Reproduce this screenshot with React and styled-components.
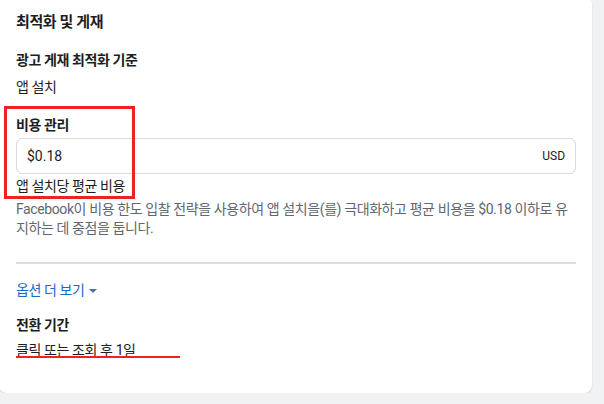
import React from "react";
import styled, { createGlobalStyle } from "styled-components";

const Global = createGlobalStyle`
  html, body { margin: 0; padding: 0; background: #f1f2f3; }
  body { font-family: Roboto, "Noto Sans CJK KR", sans-serif; color: #1c1e21; }
  * { box-sizing: border-box; }
`;

const Card = styled.div`
  width: 593px;
  margin: -4px 0 0 -1px;
  background: #fff;
  border-radius: 8px;
  box-shadow: 0 1px 2px rgba(0,0,0,0.12);
  padding: 16px 16px 33px 17px;
  display: flex;
  flex-direction: column;
  font-size: 14px;
  letter-spacing: -0.4px;
`;

const Title = styled.h2`
  margin: 0;
  font-size: 15px;
  font-weight: 700;
  line-height: 20px;
  color: #1c1e21;
`;

const Label = styled.div`
  margin-top: ${p => p.$mt || 0}px;
  font-weight: 700;
  line-height: 20px;
  color: #1c1e21;
`;

const Value = styled.div`
  margin-top: ${p => p.$mt || 0}px;
  line-height: 20px;
  color: #1c1e21;
`;

const Section = styled.div`
  position: relative;
  display: flex;
  flex-direction: column;
  margin-top: ${p => p.$mt || 0}px;
`;

const Highlight = styled.div`
  position: absolute;
  left: -12px;
  top: -9px;
  width: 131px;
  height: 93px;
  border: 3px solid #ee2222;
  pointer-events: none;
`;

const InputBox = styled.div`
  margin-top: 3px;
  height: 36px;
  border: 1px solid #d6d9dd;
  border-radius: 6px;
  display: flex;
  align-items: center;
  justify-content: space-between;
  padding: 0 10px 0 10px;
`;

const Amount = styled.span`
  font-size: 14px;
  color: #1c1e21;
  letter-spacing: 0;
`;

const Currency = styled.span`
  font-size: 12px;
  color: #1c1e21;
  letter-spacing: 0;
`;

const Desc = styled.p`
  margin: 4px 0 0;
  line-height: 19px;
  color: #606770;
  font-size: 14px;
`;

const Divider = styled.hr`
  margin: 24px 0 0;
  border: 0;
  height: 2px;
  background: #dadde1;
`;

const MoreLink = styled.a`
  margin-top: 16px;
  display: flex;
  align-items: center;
  gap: 4px;
  line-height: 20px;
  color: #1d67c9;
  text-decoration: none;
  cursor: pointer;
`;

const Caret = styled.span`
  display: inline-block;
  width: 0;
  height: 0;
  border-left: 4px solid transparent;
  border-right: 4px solid transparent;
  border-top: 4px solid #4a6fa8;
  margin-top: 2px;
`;

const Underlined = styled.div`
  position: relative;
  margin-top: 5px;
  line-height: 20px;
  color: #1c1e21;
`;

const RedLine = styled.span`
  position: absolute;
  left: 0;
  top: 16px;
  width: 164px;
  height: 2px;
  background: #ee2222;
`;

export default function App() {
  return (
    <>
      <Global />
      <Card>
        <Title>최적화 및 게재</Title>
        <Label $mt={18}>광고 게재 최적화 기준</Label>
        <Value $mt={7}>앱 설치</Value>
        <Section $mt={18}>
          <Label>비용 관리</Label>
          <InputBox>
            <Amount>$0.18</Amount>
            <Currency>USD</Currency>
          </InputBox>
          <Value $mt={2}>앱 설치당 평균 비용</Value>
          <Highlight />
        </Section>
        <Desc>
          Facebook이 비용 한도 입찰 전략을 사용하여 앱 설치을(를) 극대화하고 평균 비용을 $0.18 이하로 유지하는 데 중점을 둡니다.
        </Desc>
        <Divider />
        <MoreLink>
          옵션 더 보기 <Caret />
        </MoreLink>
        <Label $mt={15}>전환 기간</Label>
        <Underlined>
          클릭 또는 조회 후 1일
          <RedLine />
        </Underlined>
      </Card>
    </>
  );
}
